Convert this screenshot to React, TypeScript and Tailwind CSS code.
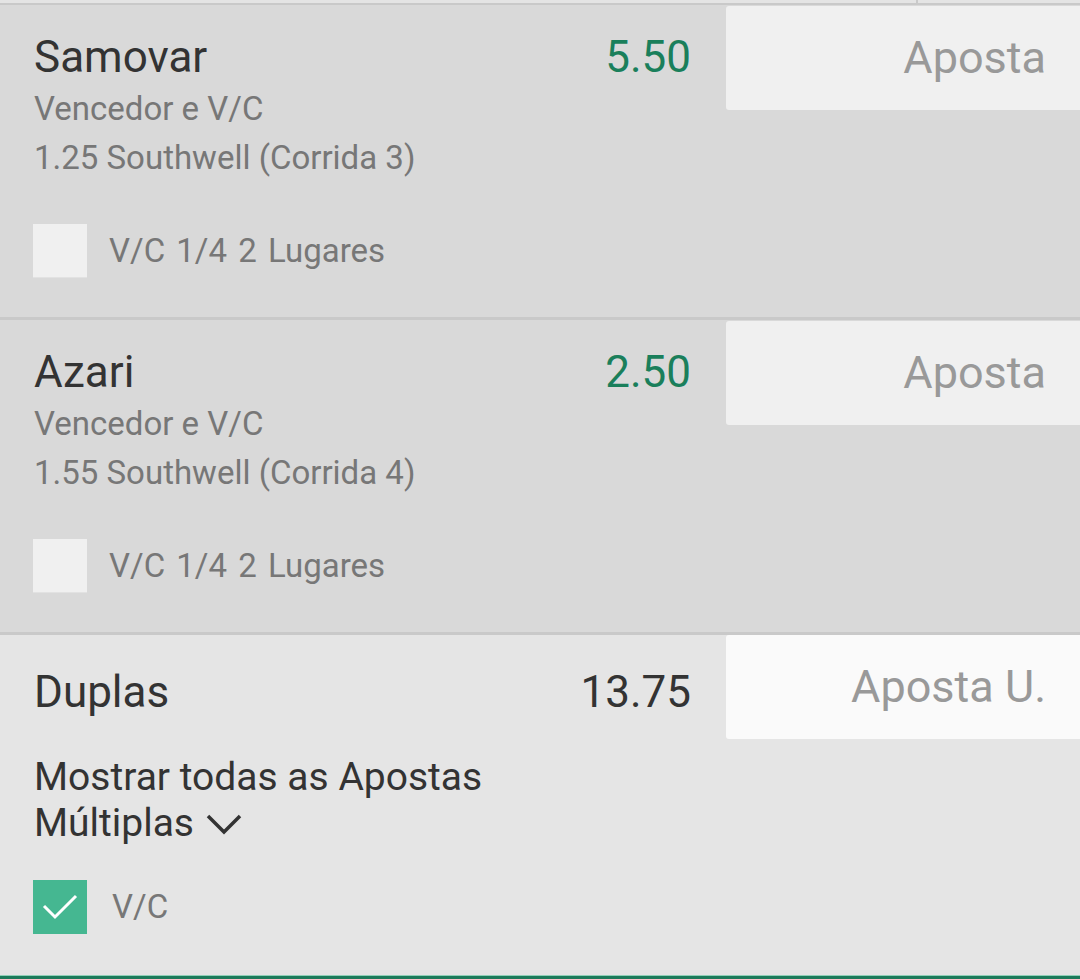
import React from 'react';

const font = { fontFamily: 'Roboto, "Noto Sans", sans-serif' };

function Selection({
  name,
  odds,
  market,
  event,
}: {
  name: string;
  odds: string;
  market: string;
  event: string;
}) {
  return (
    <div className="flex items-start bg-[#d9d9d9] border-b-[3px] border-[#c9c9c9]">
      <div className="flex-1 pl-[34px] pr-[35px] pt-[27px] pb-[39px]">
        <div className="flex justify-between">
          <span className="text-[44px] leading-[51px] text-[#333333]">{name}</span>
          <span className="text-[44px] leading-[51px] text-[#1a7f5b]">{odds}</span>
        </div>
        <div className="mt-[1px] text-[33px] leading-[49px] text-[#777777]">{market}</div>
        <div className="text-[33px] leading-[49px] text-[#777777]">{event}</div>
        <div className="mt-[42px] -ml-[1px] flex items-center gap-[22px]">
          <span className="block h-[54px] w-[54px] bg-[#f0f0f0] border-b border-[#e2e2e2]" />
          <span className="text-[33px] leading-[40px] text-[#777777] [word-spacing:3px]">
            V/C 1/4 2 Lugares
          </span>
        </div>
      </div>
      <div className="mt-[1px] flex h-[104px] w-[354px] items-center justify-end rounded-l-[3px] bg-[#f0f0f0] pr-[34px]">
        <span className="text-[45px] text-[#999999]">Aposta</span>
      </div>
    </div>
  );
}

export default function App() {
  return (
    <div style={font} className="h-[979px] w-[1080px] overflow-hidden bg-[#e5e5e5]">
      {/* Top strip from previous row */}
      <div className="flex h-[5px] border-b-[2px] border-[#c9c9c9] bg-[#e4e4e4]">
        <div className="w-[916px]" />
        <div className="w-[2px] bg-[#c9c9c9]" />
      </div>

      <Selection
        name="Samovar"
        odds="5.50"
        market="Vencedor e V/C"
        event="1.25 Southwell (Corrida 3)"
      />
      <Selection
        name="Azari"
        odds="2.50"
        market="Vencedor e V/C"
        event="1.55 Southwell (Corrida 4)"
      />

      {/* Multiples */}
      <div className="flex h-[344px] flex-col border-b-[3px] border-[#1c7a5a] bg-[#e5e5e5]">
        <div className="flex flex-1 items-start">
          <div className="flex-1 pl-[34px] pr-[35px] pt-[32px]">
            <div className="flex justify-between">
              <span className="text-[44px] leading-[50px] text-[#333333]">Duplas</span>
              <span className="text-[44px] leading-[50px] text-[#333333]">13.75</span>
            </div>
            <div className="mt-[37px] text-[39px] leading-[46px] text-[#333333]">
              <div>Mostrar todas as Apostas</div>
              <div className="flex items-center gap-[12px]">
                Múltiplas
                <svg width="36" height="22" viewBox="0 0 36 22" className="mt-[2px]">
                  <path d="M2 3 L18 19 L34 3" fill="none" stroke="#333333" strokeWidth="3.5" />
                </svg>
              </div>
            </div>
            <div className="mt-[34px] -ml-[1px] flex items-center gap-[25px]">
              <span className="flex h-[54px] w-[54px] items-center justify-center bg-[#45b791]">
                <svg width="36" height="28" viewBox="0 0 36 28">
                  <path d="M2 13 L13 24 L34 3" fill="none" stroke="#ffffff" strokeWidth="3" />
                </svg>
              </span>
              <span className="text-[33px] leading-[40px] text-[#777777]">V/C</span>
            </div>
          </div>
          <div className="flex h-[104px] w-[354px] items-center justify-end rounded-l-[3px] bg-[#fafafa] pr-[34px]">
            <span className="text-[45px] text-[#999999]">Aposta U.</span>
          </div>
        </div>
        <div className="h-[1px] bg-[#8fd0b8]" />
      </div>
    </div>
  );
}
